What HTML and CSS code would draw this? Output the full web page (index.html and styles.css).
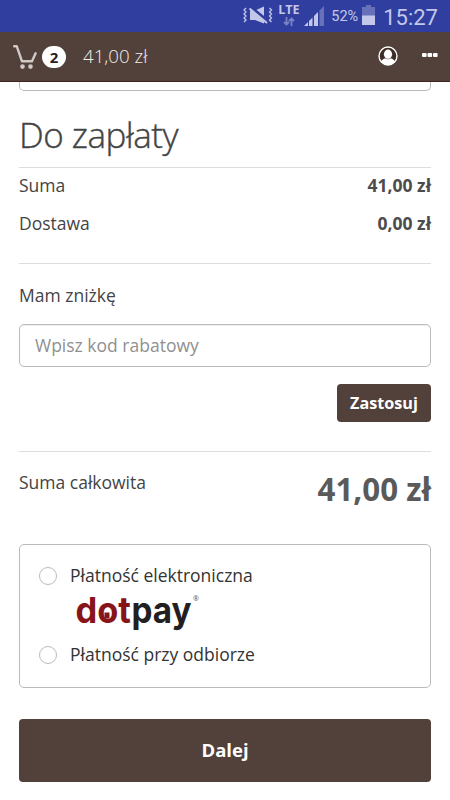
FILE: index.html
```html
<!DOCTYPE html>
<html lang="pl">
<head>
    <meta charset="UTF-8">
    <meta name="viewport" content="width=device-width, initial-scale=1.0">
    <title>Do zapłaty</title>
    <link rel="stylesheet" href="styles.css">
</head>
<body>
    <div class="status-bar">
        <svg class="icon-mute" width="30" height="20" viewBox="0 0 30 20" fill="none" stroke="#c3c8ea">
            <path d="M3 2l-2 2 2 2-2 2 2 2-2 2 2 2-2 2M26.500 2l2 2-2 2 2 2-2 2 2 2-2 2 2 2" stroke-width="1.300"/>
            <path d="M7 4.500h5l9-4v17l-9-3.500H7z" fill="#c3c8ea" stroke="none"/>
            <path d="M6.500 0l17.500 14.500" stroke="#303f9f" stroke-width="3"/>
            <path d="M6.500 2.500l17.500 14.500" stroke-width="2"/>
        </svg>
        <div class="lte">
            <span>LTE</span>
            <svg width="12" height="9" viewBox="0 0 12 9" fill="none" stroke="#7882c4" stroke-width="1.800">
                <path d="M3.500 0v7M1 5l2.500 2.500L6 5M8.500 9V2M6 4l2.500-2.500L11 4"/>
            </svg>
        </div>
        <svg class="icon-signal" width="20" height="20" viewBox="0 0 20 20">
            <path d="M0 20l4-4v4zM5 20v-5l3.500-3.500V20zM10 20v-10l4-4v14z" fill="#c3c8ea"/>
            <path d="M15.500 20V4.500L20 0v20z" fill="#6670bb"/>
        </svg>
        <span class="battery-text">52%</span>
        <svg class="icon-battery" width="13" height="20" viewBox="0 0 13 20">
            <path d="M4 0h5v2h4v9H0V2h4z" fill="#6670bb"/>
            <path d="M0 10.500h13V20H0z" fill="#c3c8ea"/>
        </svg>
        <span class="clock">15:27</span>
    </div>
    <div class="header">
        <svg class="icon-cart" width="24" height="24" viewBox="0 0 24 24" fill="none" stroke="#cfcac8" stroke-width="2.400" stroke-linecap="round" stroke-linejoin="round">
            <path d="M1.200 1.300h2.600L9 16.300h10l3.600-8"/>
            <circle cx="9.500" cy="21.600" r="2.300" fill="#cfcac8" stroke="none"/>
            <circle cx="17.500" cy="21.600" r="2.300" fill="#cfcac8" stroke="none"/>
        </svg>
        <span class="badge">2</span>
        <span class="header-price">41,00 zł</span>
        <svg class="icon-user" width="20" height="20" viewBox="0 0 20 20">
            <circle cx="10" cy="10" r="9" fill="#402d27" stroke="#fff" stroke-width="1.400"/>
            <path d="M3 15.500c1-2.200 3-3 5-3.300h4c2 .3 4 1.100 5 3.300-1.500 2.300-4 3.500-7 3.500s-5.500-1.200-7-3.500z" fill="#fff"/>
            <ellipse cx="10" cy="8.300" rx="4.100" ry="4.700" fill="#fff"/>
            <path d="M7.300 12.200q2.700 2 5.400 0" fill="none" stroke="#8d827e" stroke-width=".7"/>
        </svg>
        <svg class="icon-more" width="16" height="4" viewBox="0 0 16 4" fill="#fff">
            <rect width="4.600" height="4" rx="1"/>
            <rect x="5.500" width="4.600" height="4" rx="1"/>
            <rect x="11" width="4.600" height="4" rx="1"/>
        </svg>
    </div>
    <div class="container">
        <div class="prev-box"></div>
        <h1>Do zapłaty</h1>
        <div class="summary">
            <div class="row"><span>Suma</span><b>41,00 zł</b></div>
            <div class="row"><span>Dostawa</span><b>0,00 zł</b></div>
        </div>
        <div class="discount">
            <label for="code">Mam zniżkę</label>
            <input type="text" id="code" name="code" placeholder="Wpisz kod rabatowy">
            <button class="apply">Zastosuj</button>
        </div>
        <div class="total">
            <span>Suma całkowita</span>
            <b>41,00 zł</b>
        </div>
        <div class="payment">
            <label class="option"><input type="radio" name="payment">Płatność elektroniczna</label>
            <svg class="dotpay" width="126" height="40" viewBox="0 0 126 40">
                <text class="logo-dot" x="-0.500" y="29" textLength="55.500" lengthAdjust="spacingAndGlyphs">dot</text>
                <text class="logo-pay" x="55.500" y="29" textLength="60" lengthAdjust="spacingAndGlyphs">pay</text>
                <path d="M28.500 18.500h5v6h-5z" fill="#871418"/>
                <text class="logo-reg" x="117" y="7">®</text>
            </svg>
            <label class="option"><input type="radio" name="payment">Płatność przy odbiorze</label>
        </div>
        <button class="next">Dalej</button>
    </div>
</body>
</html>
```
FILE: styles.css
```css
* {
    box-sizing: border-box;
}
body {
    margin: 0;
    height: 800px;
    overflow: hidden;
    background: #fff;
    color: #444;
    font-family: "Open Sans", sans-serif;
    font-size: 17.5px;
    line-height: 24px;
}
svg {
    display: block;
    flex: none;
}
.status-bar {
    display: flex;
    height: 32px;
    padding: 6px 12px 0 0;
    justify-content: flex-end;
    align-items: flex-start;
    background: #303f9f;
    color: #c3c8ea;
    font-family: Roboto, sans-serif;
}
.icon-mute {
    margin-right: 5px;
}
.lte {
    display: flex;
    flex-direction: column;
    align-items: center;
    width: 21px;
    margin: -2px 5px 0 0;
    font: bold 12.5px/12px "Open Sans", sans-serif;
}
.lte svg {
    margin-top: 1px;
}
.icon-signal {
    margin-right: 7px;
}
.battery-text {
    margin-right: 4px;
    font-size: 14.5px;
    line-height: 22px;
}
.icon-battery {
    margin: -1px 8px 0 0;
}
.clock {
    font-size: 22px;
    line-height: 23px;
}
.header {
    display: flex;
    height: 50px;
    padding: 0 12px 0 13px;
    align-items: center;
    background: #52403a;
    border-bottom: 1px solid #3e241c;
    color: #fff;
}
.icon-cart {
    margin-top: 1px;
}
.badge {
    width: 24px;
    height: 22px;
    margin: 0 17px 0 5px;
    border-radius: 11px;
    background: #fff;
    color: #2b211e;
    font-size: 15px;
    font-weight: bold;
    line-height: 22px;
    text-align: center;
}
.header-price {
    margin: -2px auto 0 0;
    color: #f0edec;
    font-size: 18.7px;
    font-weight: 300;
}
.icon-user {
    margin: -2px 24px 0 0;
}
.icon-more {
    margin-top: -3px;
}
.container {
    padding: 0 19px;
}
.prev-box {
    height: 9px;
    border: 1px solid #bbb;
    border-top: none;
    border-radius: 0 0 5px 5px;
}
h1 {
    margin: 0;
    height: 76px;
    padding-top: 20px;
    color: #444;
    font-size: 35px;
    font-weight: 300;
    line-height: 48px;
    letter-spacing: -0.5px;
    -webkit-text-stroke: 0.4px #444;
}
.summary {
    height: 97px;
    padding-top: 5px;
    border-top: 1px solid #ddd;
    border-bottom: 1px solid #ddd;
}
.row {
    display: flex;
    height: 38px;
    justify-content: space-between;
}
.row b {
    color: #4c4c4c;
}
.discount {
    display: flex;
    flex-direction: column;
    height: 187px;
    padding-top: 19px;
}
.discount input {
    height: 43px;
    margin: 17px 0 17px;
    padding: 0 15px 2px;
    border: 1px solid #bbb;
    border-radius: 5px;
    box-shadow: inset 0 1px 1px #eee;
    font: inherit;
}
.discount input::placeholder {
    color: #909090;
}
.apply {
    align-self: flex-end;
    width: 94px;
    height: 38px;
    padding: 0;
    border: none;
    border-radius: 4px;
    background: #52403a;
    color: #fff;
    font: bold 16.2px "Open Sans", sans-serif;
}
.total {
    display: flex;
    height: 93px;
    padding-top: 18px;
    justify-content: space-between;
    border-top: 1px solid #ddd;
}
.total b {
    color: #5a5a5a;
    font-size: 31.3px;
    line-height: 38px;
}
.payment {
    height: 144px;
    padding: 18px 19px 0;
    border: 1px solid #bbb;
    border-radius: 5px;
}
.option {
    display: flex;
    align-items: center;
    color: #333;
}
.option input {
    appearance: none;
    width: 18px;
    height: 18px;
    margin: 2px 13px 0 0;
    border: 1px solid #bbb;
    border-radius: 50%;
}
.dotpay {
    margin: 7px 0 8px 37px;
    overflow: visible;
}
.logo-dot, .logo-pay {
    font: bold 36px Inter, sans-serif;
    fill: #871418;
}
.logo-pay {
    fill: #231f20;
}
.logo-reg {
    font: 7px "Open Sans", sans-serif;
    fill: #555;
}
.next {
    display: block;
    width: 100%;
    height: 63px;
    margin-top: 31px;
    padding: 0 0 2px;
    border: none;
    border-radius: 4px;
    background: #52403a;
    color: #fff;
    font: bold 18.5px "Open Sans", sans-serif;
}
```
